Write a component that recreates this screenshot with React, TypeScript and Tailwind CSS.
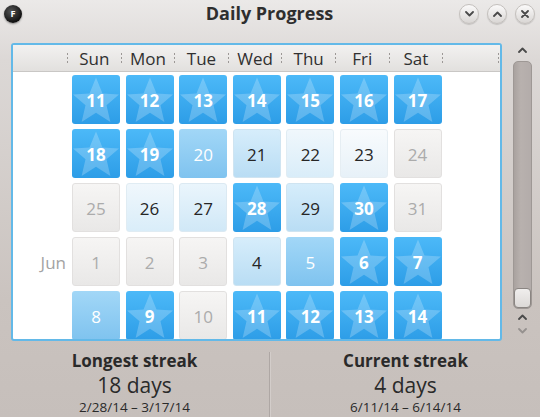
import React from "react"

type Kind = "star" | "mid" | "l4" | "l3" | "l2" | "l1" | "gray"

const rows: { label?: string; days: [number, Kind][] }[] = [
  {
    days: [
      [11, "star"],
      [12, "star"],
      [13, "star"],
      [14, "star"],
      [15, "star"],
      [16, "star"],
      [17, "star"],
    ],
  },
  {
    days: [
      [18, "star"],
      [19, "star"],
      [20, "mid"],
      [21, "l4"],
      [22, "l2"],
      [23, "l1"],
      [24, "gray"],
    ],
  },
  {
    days: [
      [25, "gray"],
      [26, "l2"],
      [27, "l3"],
      [28, "star"],
      [29, "l4"],
      [30, "star"],
      [31, "gray"],
    ],
  },
  {
    label: "Jun",
    days: [
      [1, "gray"],
      [2, "gray"],
      [3, "gray"],
      [4, "l4"],
      [5, "mid"],
      [6, "star"],
      [7, "star"],
    ],
  },
  {
    days: [
      [8, "mid"],
      [9, "star"],
      [10, "gray"],
      [11, "star"],
      [12, "star"],
      [13, "star"],
      [14, "star"],
    ],
  },
]

const kindClass: Record<Kind, string> = {
  star: "bg-[linear-gradient(to_bottom,#4cb9f8,#2d9de7)] text-white font-bold",
  mid: "bg-[linear-gradient(to_bottom,#a2d7f7,#7fc3ef)] text-white",
  l4: "bg-[linear-gradient(to_bottom,#d6edfb,#b9ddf4)] text-[#262626] border border-[#cfe4f1]",
  l3: "bg-[linear-gradient(to_bottom,#eaf5fc,#d0e8f7)] text-[#262626] border border-[#dbe9f2]",
  l2: "bg-[linear-gradient(to_bottom,#f0f7fc,#d9edf9)] text-[#262626] border border-[#e0ecf3]",
  l1: "bg-[linear-gradient(to_bottom,#f8fbfd,#e7f1f8)] text-[#262626] border border-[#e6eef3]",
  gray: "bg-[linear-gradient(to_bottom,#f6f5f4,#e9e8e7)] text-[#ababab] border border-[#e2e0df]",
}

function Star() {
  return (
    <svg viewBox="0 0 48 49" className="absolute inset-0 h-full w-full">
      <path
        d="M24 2.5 L30.5 18.5 L47 19.5 L34.5 30.3 L38.4 47 L24 37.8 L9.6 47 L13.5 30.3 L1 19.5 L17.5 18.5 Z"
        fill="rgba(255,255,255,0.22)"
      />
    </svg>
  )
}

function DayCell({ day, kind }: { day: number; kind: Kind }) {
  return (
    <div className="pl-[4px]">
      <div
        className={`relative flex h-[49px] w-[48px] items-center justify-center rounded-[3px] text-[17px] ${kindClass[kind]}`}
      >
        {kind === "star" && <Star />}
        <span className="relative pt-[2px]">{day}</span>
      </div>
    </div>
  )
}

function Grip() {
  return (
    <div className="flex flex-col gap-[2px]">
      <span className="h-[2px] w-[1px] bg-[#9c9896]" />
      <span className="h-[2px] w-[1px] bg-[#9c9896]" />
      <span className="h-[2px] w-[1px] bg-[#9c9896]" />
    </div>
  )
}

function HeaderSection({ label }: { label?: string }) {
  return (
    <div className="flex items-center">
      <span className="flex-1 text-center text-[17px] text-[#303030] pt-[1px]">
        {label}
      </span>
      <Grip />
    </div>
  )
}

function TitleButton({ children }: { children: React.ReactNode }) {
  return (
    <div className="flex h-[20px] w-[20px] items-center justify-center rounded-full border border-[#c4c0bd] bg-[linear-gradient(to_bottom,#fbfafa,#d9d6d4)] shadow-[0_1px_1px_rgba(0,0,0,0.15)]">
      {children}
    </div>
  )
}

function Chevron({ up }: { up?: boolean }) {
  return (
    <svg width="9" height="6" viewBox="0 0 9 6">
      <path
        d={up ? "M1 5 L4.5 1.5 L8 5" : "M1 1 L4.5 4.5 L8 1"}
        fill="none"
        stroke="#4a4a4a"
        strokeWidth="1.8"
        strokeLinecap="round"
        strokeLinejoin="round"
      />
    </svg>
  )
}

function Stat({
  title,
  value,
  range,
}: {
  title: string
  value: string
  range: string
}) {
  return (
    <div className="flex flex-1 flex-col items-center pt-[9px] text-[#2a2a2a]">
      <div className="text-[17px] font-bold leading-[22px]">{title}</div>
      <div className="text-[21px] leading-[26px]">{value}</div>
      <div className="text-[13.5px] leading-[19px]">{range}</div>
    </div>
  )
}

export default function App() {
  return (
    <div className="flex h-[417px] w-[540px] flex-col overflow-hidden bg-[linear-gradient(to_bottom,#ebe9e8_0px,#dcd8d6_60px,#cac3bf_300px,#c6bfbb_100%)] font-['Open_Sans',sans-serif]">
      {/* title bar */}
      <div className="grid h-[26px] grid-cols-[1fr_auto_1fr] items-center pl-[4px] pr-[5px]">
        <div className="flex h-[18px] w-[18px] items-center justify-center rounded-full bg-[radial-gradient(circle_at_40%_35%,#555,#111_70%)] shadow-[0_1px_2px_rgba(0,0,0,0.4)]">
          <span className="text-[9px] font-bold leading-none text-white">F</span>
        </div>
        <div className="text-center text-[18px] font-bold text-[#2e2e2e]">
          Daily Progress
        </div>
        <div className="flex justify-end gap-[8px]">
          <TitleButton>
            <Chevron />
          </TitleButton>
          <TitleButton>
            <Chevron up />
          </TitleButton>
          <TitleButton>
            <svg width="8" height="8" viewBox="0 0 8 8">
              <path
                d="M1 1 L7 7 M7 1 L1 7"
                stroke="#4a4a4a"
                strokeWidth="1.8"
                strokeLinecap="round"
              />
            </svg>
          </TitleButton>
        </div>
      </div>

      {/* table + scrollbar */}
      <div className="mt-[17px] flex pl-[11px]">
        <div className="h-[298px] w-[491px] overflow-hidden rounded-[3px] border-2 border-[#63b9e8] bg-white">
          <div className="grid h-[27px] grid-cols-[55px_repeat(7,53.6px)_1fr] border-b border-[#c9c7c5] bg-[linear-gradient(to_bottom,#f2f1f0,#e2e0de)]">
            <HeaderSection />
            <HeaderSection label="Sun" />
            <HeaderSection label="Mon" />
            <HeaderSection label="Tue" />
            <HeaderSection label="Wed" />
            <HeaderSection label="Thu" />
            <HeaderSection label="Fri" />
            <HeaderSection label="Sat" />
            <div className="flex items-center justify-end pr-[1px]">
              <Grip />
            </div>
          </div>
          <div className="grid grid-cols-[55px_repeat(7,53.6px)_1fr] gap-y-[5px] pt-[3px]">
            {rows.map((row, i) => (
              <React.Fragment key={i}>
                <div className="flex items-center justify-end pr-[2px] pt-[2px] text-[17px] text-[#a3a3a3]">
                  {row.label}
                </div>
                {row.days.map(([d, k], j) => (
                  <DayCell key={j} day={d} kind={k} />
                ))}
                <div />
              </React.Fragment>
            ))}
          </div>
        </div>

        {/* scrollbar */}
        <div className="flex w-[38px] flex-col items-center pl-[2px]">
          <div className="mt-[4px] h-[12px]">
            <Chevron up />
          </div>
          <div className="mt-[2px] flex h-[248px] w-[19px] flex-col justify-end rounded-[5px] border border-[#9e9895] bg-[linear-gradient(to_right,#a9a29f,#b8b1ae_40%,#b3acaa)]">
            <div className="h-[20px] rounded-[4px] border border-[#8a8582] bg-[linear-gradient(to_bottom,#f0eeed,#dcd9d7)]" />
          </div>
          <div className="mt-[5px] h-[12px]">
            <Chevron up />
          </div>
          <div className="mt-[2px] h-[10px] opacity-40">
            <Chevron />
          </div>
        </div>
      </div>

      {/* footer */}
      <div className="flex flex-1">
        <Stat title="Longest streak" value="18 days" range="2/28/14 – 3/17/14" />
        <div className="mt-[11px] w-[2px] border-l border-[#aea7a4] bg-[#d3cdca]" />
        <Stat title="Current streak" value="4 days" range="6/11/14 – 6/14/14" />
      </div>
    </div>
  )
}
